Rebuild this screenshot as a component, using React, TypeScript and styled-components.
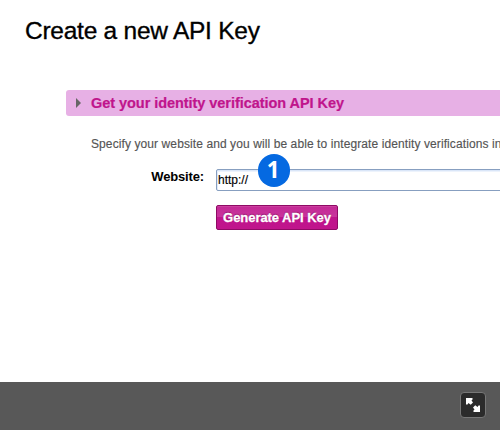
import React from "react";
import styled, { createGlobalStyle } from "styled-components";

const GlobalStyle = createGlobalStyle`
  * { box-sizing: border-box; }
  body {
    margin: 0;
    overflow: hidden;
    background: #fff;
    font-family: "Liberation Sans", Arial, Helvetica, sans-serif;
  }
`;

const Page = styled.div`
  display: flex;
  flex-direction: column;
  width: 500px;
  height: 430px;
  overflow: hidden;
`;

const Content = styled.main`
  flex: 1;
  padding: 16px 0 0 25px;
  overflow: hidden;
`;

const Title = styled.h1`
  margin: 0;
  font-size: 24.5px;
  font-weight: 400;
  line-height: 30px;
  letter-spacing: -0.25px;
  color: #000;
  -webkit-text-stroke: 0.35px #000;
  white-space: nowrap;
`;

const Section = styled.section`
  margin: 44px 0 0 41px;
`;

const SectionHeader = styled.div`
  display: flex;
  align-items: center;
  height: 26px;
  padding-left: 10px;
  border-radius: 3px 0 0 3px;
  background: #e7b0e5;
`;

const Arrow = styled.svg`
  width: 5px;
  height: 10px;
  margin: 0 10px 1px 0;
  fill: #666;
`;

const SectionTitle = styled.h2`
  margin: 0;
  font-size: 14.5px;
  line-height: 26px;
  letter-spacing: -0.05px;
  color: #c0158c;
  -webkit-text-stroke: 0.2px #c0158c;
  white-space: nowrap;
`;

const Description = styled.p`
  margin: 20px 0 0 25px;
  font-size: 12px;
  line-height: 16px;
  letter-spacing: 0.095px;
  color: #555;
  -webkit-text-stroke: 0.15px #555;
  white-space: nowrap;
`;

const Form = styled.form`
  display: grid;
  grid-template-columns: 138px 1fr;
  column-gap: 12px;
  row-gap: 14px;
  margin-top: 17px;
`;

const Label = styled.label`
  font-size: 13px;
  font-weight: 700;
  line-height: 16px;
  letter-spacing: -0.15px;
  text-align: right;
`;

const Field = styled.div`
  position: relative;
  width: 300px;
  height: 22px;
`;

const Input = styled.input`
  display: block;
  width: 100%;
  height: 22px;
  padding: 0 1px;
  border: 1px solid #879fc0;
  border-radius: 2px;
  outline: none;
  background: #fff;
  box-shadow: inset 0 1px #dae6f8, inset 0 2px #edf3fc, inset 1px 0 #e0eafa;
  font: 12px "Liberation Sans", Arial, sans-serif;
  color: #000;
  -webkit-text-stroke: 0.15px #000;
`;

const StepBadge = styled.span`
  position: absolute;
  left: 41.5px;
  top: -15px;
  width: 32.5px;
  height: 32.5px;
  padding-right: 1px;
  border-radius: 50%;
  background: #0569e1;
  color: #fff;
  font: 700 22.5px/32px "Open Sans", "Noto Sans", sans-serif;
  text-align: center;
`;

const SubmitButton = styled.button`
  grid-column: 2;
  width: 122px;
  height: 25px;
  padding: 0;
  border: 1px solid #8e0a65;
  border-radius: 2px;
  background: linear-gradient(#c32995 0, #c9359d 11px, #bf148c 11px, #c0158c 100%);
  box-shadow: inset 0 1px #cb409f;
  color: #fff;
  font: 700 13px/23px "Liberation Sans", Arial, sans-serif;
  letter-spacing: -0.05px;
  text-shadow: 0 -1px 1px #8e0a65;
  -webkit-text-stroke: 0.3px #fff;
  white-space: nowrap;
`;

const Footer = styled.footer`
  display: flex;
  justify-content: flex-end;
  height: 48px;
  padding: 10px 14px 0 0;
  background: #585858;
`;

const ExpandButton = styled.button`
  display: block;
  width: 26px;
  height: 26px;
  padding: 0;
  border: 1px solid #777;
  border-radius: 4px;
  background: #2b2b2b;
`;

const ExpandIcon = styled.svg`
  display: block;
  width: 24px;
  height: 24px;
  fill: #fff;
`;

export default function App() {
  return (
    <Page>
      <GlobalStyle />
      <Content>
        <Title>Create a new API Key</Title>
        <Section>
          <SectionHeader>
            <Arrow viewBox="0 0 5 10">
              <path d="M0 0L5 5L0 10Z" />
            </Arrow>
            <SectionTitle>Get your identity verification API Key</SectionTitle>
          </SectionHeader>
          <Description>
            Specify your website and you will be able to integrate identity verifications in
          </Description>
          <Form>
            <Label htmlFor="website">Website:</Label>
            <Field>
              <Input id="website" defaultValue="http://" />
              <StepBadge>1</StepBadge>
            </Field>
            <SubmitButton type="button">Generate API Key</SubmitButton>
          </Form>
        </Section>
      </Content>
      <Footer>
        <ExpandButton type="button" aria-label="Expand">
          <ExpandIcon viewBox="0 0 24 24">
            <path d="M5 5H11.5V6.5L10.5 7.5L12 9.5L9.7 11.7L7.5 10L6.5 11.5H5Z" />
            <path d="M19 19H12.5V17.5L13.5 16.5L12 14.5L14.3 12.3L16.5 14L17.5 12.5H19Z" />
          </ExpandIcon>
        </ExpandButton>
      </Footer>
    </Page>
  );
}
